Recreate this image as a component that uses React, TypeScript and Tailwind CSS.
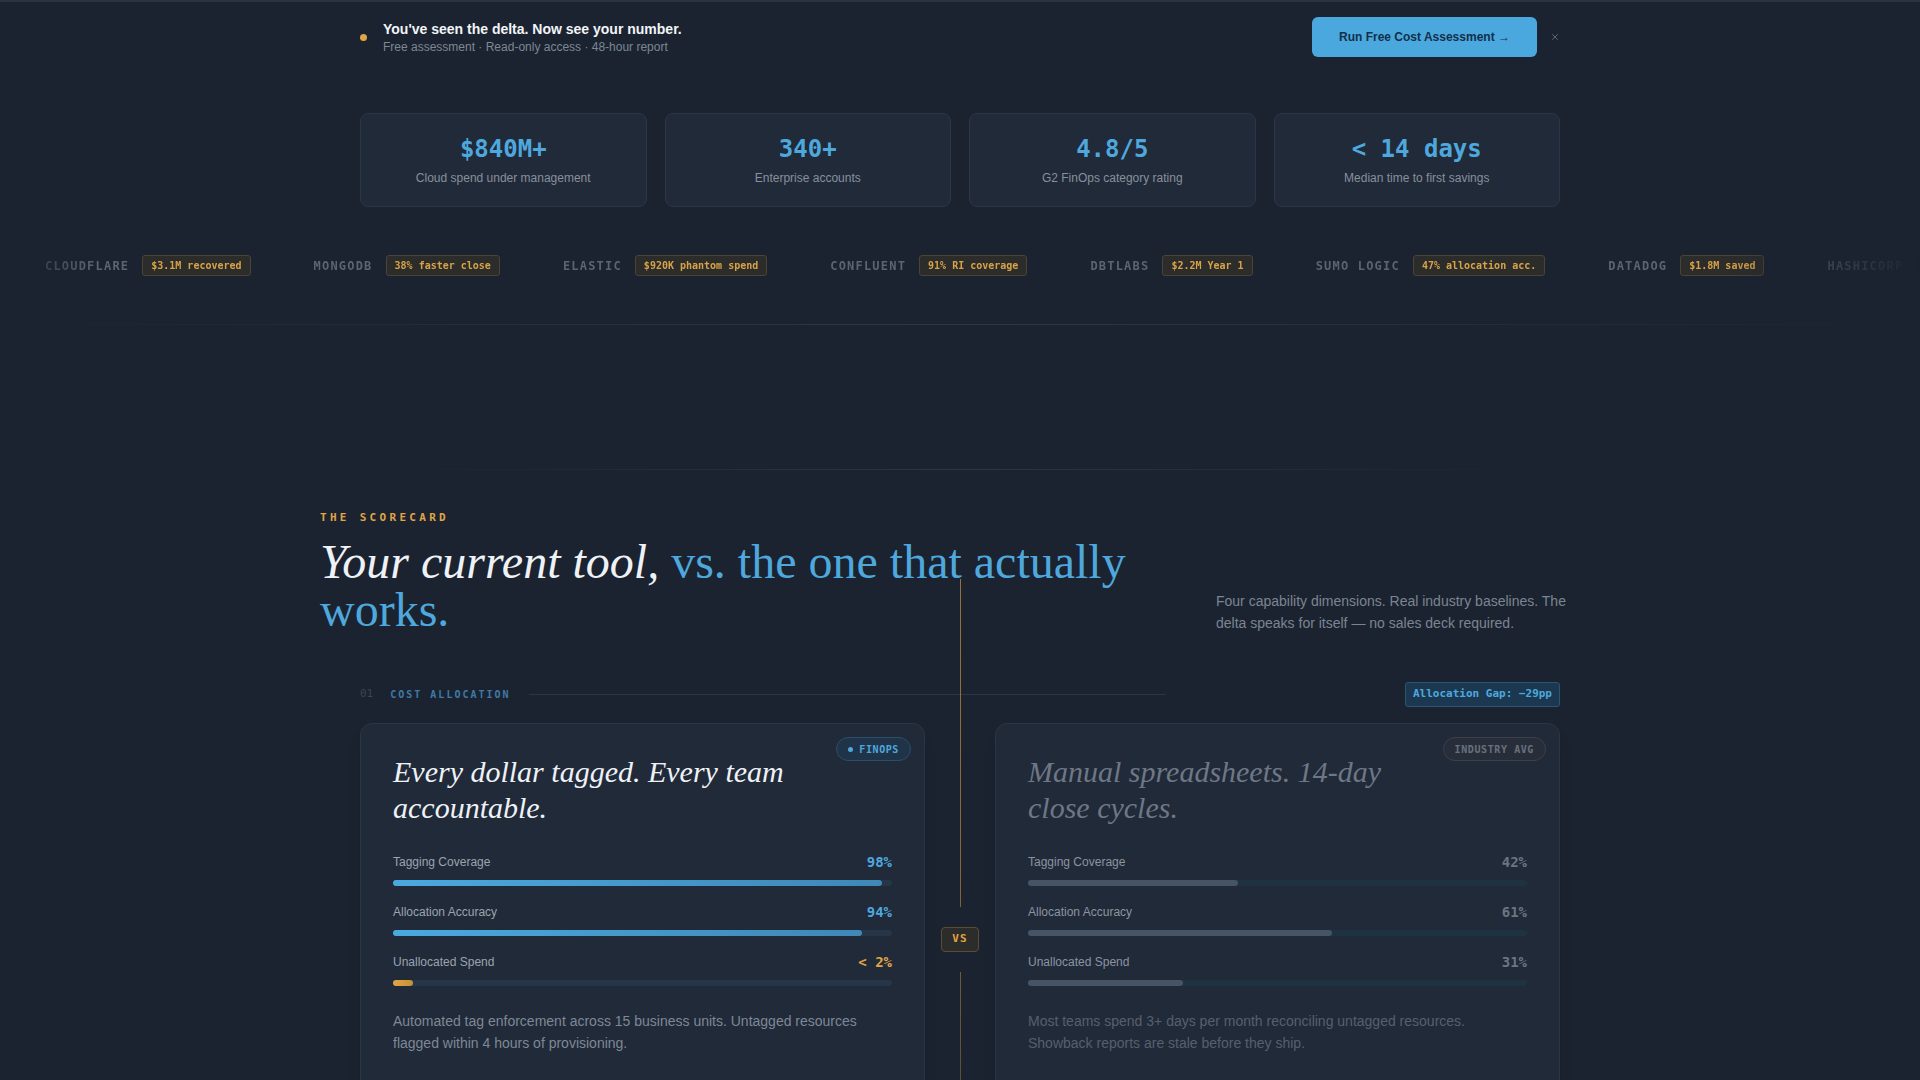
import { X } from 'lucide-react'

const mono = "font-['DejaVu_Sans_Mono',monospace]"
const serif = "font-['Liberation_Serif',serif]"

const stats = [
  { value: '$840M+', label: 'Cloud spend under management' },
  { value: '340+', label: 'Enterprise accounts' },
  { value: '4.8/5', label: 'G2 FinOps category rating' },
  { value: '< 14 days', label: 'Median time to first savings' },
]

const logos = [
  { name: 'CLOUDFLARE', tag: '$3.1M recovered' },
  { name: 'MONGODB', tag: '38% faster close' },
  { name: 'ELASTIC', tag: '$920K phantom spend' },
  { name: 'CONFLUENT', tag: '91% RI coverage' },
  { name: 'DBTLABS', tag: '$2.2M Year 1' },
  { name: 'SUMO LOGIC', tag: '47% allocation acc.' },
  { name: 'DATADOG', tag: '$1.8M saved' },
  { name: 'HASHICORP', tag: '$640K reclaimed' },
]

type Metric = { label: string; value: string; pct: number; warn?: boolean }

const finops: Metric[] = [
  { label: 'Tagging Coverage', value: '98%', pct: 98 },
  { label: 'Allocation Accuracy', value: '94%', pct: 94 },
  { label: 'Unallocated Spend', value: '< 2%', pct: 4, warn: true },
]

const industry: Metric[] = [
  { label: 'Tagging Coverage', value: '42%', pct: 42 },
  { label: 'Allocation Accuracy', value: '61%', pct: 61 },
  { label: 'Unallocated Spend', value: '31%', pct: 31 },
]

function MetricRow({ m, muted }: { m: Metric; muted?: boolean }) {
  return (
    <div>
      <div className="flex items-center justify-between h-[18px]">
        <span className={`text-[12px] ${muted ? 'text-[#8b94a0]' : 'text-[#9ba4b0]'}`}>{m.label}</span>
        <span
          className={`${mono} text-[14px] font-bold ${
            muted ? 'text-[#6b7582]' : m.warn ? 'text-[#e0a545]' : 'text-[#4ea8de]'
          }`}
        >
          {m.value}
        </span>
      </div>
      <div className={`mt-[9px] h-[6px] rounded-full ${muted ? 'bg-[#1e3242]' : 'bg-[#263548]'}`}>
        <div
          className={`h-full rounded-full ${
            muted
              ? 'bg-[#475466]'
              : m.warn
                ? 'bg-gradient-to-r from-[#e0a545] to-[#c98f35]'
                : 'bg-gradient-to-r from-[#4aa9df] to-[#3f88b7]'
          }`}
          style={{ width: `${m.pct}%` }}
        />
      </div>
    </div>
  )
}

function Card({
  badge,
  title,
  metrics,
  desc,
  muted,
}: {
  badge: string
  title: string
  metrics: Metric[]
  desc: string
  muted?: boolean
}) {
  return (
    <div className="relative h-[432px] rounded-xl border border-[#2a3546] bg-[#212a39] px-8 pt-[30px] shadow-lg">
      <div
        className={`absolute right-[13px] top-[13px] flex h-6 items-center gap-[6px] rounded-full border px-[11px] ${mono} text-[10px] font-bold tracking-[0.06em] ${
          muted
            ? 'border-[#3a414d] bg-[#272e3a] text-[#69717d]'
            : 'border-[#2c4d69] bg-[#1f3448] text-[#4ea8de]'
        }`}
      >
        {!muted && <span className="h-[5px] w-[5px] rounded-full bg-[#4ea8de]" />}
        {badge}
      </div>
      <h3
        className={`${serif} max-w-[400px] text-[30px] italic leading-[36px] ${
          muted ? 'text-[#6e7785]' : 'text-[#eef2f6]'
        }`}
      >
        {title}
      </h3>
      <div className="mt-[27px] flex flex-col gap-[17px]">
        {metrics.map((m) => (
          <MetricRow key={m.label} m={m} muted={muted} />
        ))}
      </div>
      <p className={`mt-[24px] text-[14px] leading-[22px] ${muted ? 'text-[#56606d]' : 'text-[#7e8895]'}`}>{desc}</p>
    </div>
  )
}

export default function App() {
  return (
    <div className="min-h-screen overflow-hidden bg-[#1b2330] font-['Liberation_Sans',Arial,sans-serif]">
      {/* sticky nudge */}
      <div className="border-t-2 border-[#283241]">
        <div className="mx-auto flex w-[1200px] items-center pt-[15px]">
          <span className="h-[7px] w-[7px] rounded-full bg-[#e0a545]" />
          <div className="ml-4">
            <div className="text-[14px] font-bold leading-[18px] text-[#f2f5f8]">You've seen the delta. Now see your number.</div>
            <div className="mt-[1px] text-[12px] leading-4 text-[#7d8794]">
              Free assessment · Read-only access · 48-hour report
            </div>
          </div>
          <button className="ml-auto h-10 w-[225px] rounded-md bg-[#4aa8de] text-[12px] font-bold text-[#12304a]">
            Run Free Cost Assessment →
          </button>
          <X className="ml-[13px] h-[10px] w-[10px] text-[#6b7481]" strokeWidth={2} />
        </div>
      </div>

      {/* stats */}
      <div className="mx-auto mt-[56px] grid w-[1200px] grid-cols-4 gap-[18px]">
        {stats.map((s) => (
          <div
            key={s.label}
            className="flex h-[94px] flex-col items-center justify-center rounded-lg border border-[#2b3647] bg-[#212a39]"
          >
            <div className={`${mono} text-[24px] font-bold leading-7 text-[#4ea8de]`}>{s.value}</div>
            <div className="mt-[7px] text-[12px] leading-4 text-[#87909c]">{s.label}</div>
          </div>
        ))}
      </div>

      {/* logo strip */}
      <div className="mt-[48px] flex h-[21px] items-center gap-[63px] whitespace-nowrap pl-[45px] [mask-image:linear-gradient(90deg,transparent,black_5%,black_90%,transparent)]">
        {logos.map((l) => (
          <div key={l.name} className="flex shrink-0 items-center gap-[13px]">
            <span className={`${mono} text-[12px] font-bold tracking-[0.1em] text-[#5a6472]`}>{l.name}</span>
            <span
              className={`${mono} flex h-[21px] items-center rounded-[3px] border border-[#4b4436] bg-[#2c2c2b] px-[8px] text-[10px] font-bold text-[#d8a348]`}
            >
              {l.tag}
            </span>
          </div>
        ))}
      </div>
      <div className="mt-[48px] h-px bg-gradient-to-r from-transparent via-[#2c3848] to-transparent" />

      <div className="mx-auto mt-[144px] h-px w-[1140px] bg-gradient-to-r from-transparent via-[#2b3646] to-transparent" />

      {/* scorecard */}
      <section className="relative mx-auto w-[1280px] pt-[40px]">
        <div className="absolute bottom-0 left-[640px] top-[109px] w-px bg-gradient-to-b from-[#c9953f]/70 via-[#c9953f]/60 to-[#c9953f]/30" />
        <div className={`${mono} text-[11px] font-bold leading-4 tracking-[0.3em] text-[#e0a545]`}>THE SCORECARD</div>
        <div className="mt-3 flex items-end justify-between">
          <h2 className={`${serif} max-w-[830px] text-[48px] leading-[48px] text-[#eef2f6]`}>
            <em>Your current tool,</em> <span className="text-[#4ea8de]">vs. the one that actually works.</span>
          </h2>
          <p className="w-[384px] text-[14px] leading-[22px] text-[#7b8592]">
            Four capability dimensions. Real industry baselines. The delta speaks for itself — no sales deck required.
          </p>
        </div>

        <div className="mt-12 px-10">
          <div className="flex h-[25px] items-center">
            <span className={`${mono} text-[11px] text-[#3a4454]`}>01</span>
            <span className={`${mono} ml-[17px] text-[10px] font-bold tracking-[0.2em] text-[#3f7aa6]`}>COST ALLOCATION</span>
            <span className="ml-[18px] h-px w-[637px] bg-[#2a3546]" />
            <span
              className={`${mono} ml-auto flex h-[25px] items-center rounded-[3px] border border-[#2b5575] bg-[#1b3850] px-[7px] text-[11px] font-bold text-[#4ea8de]`}
            >
              Allocation Gap: −29pp
            </span>
          </div>

          <div className="mt-4 grid grid-cols-[1fr_70px_1fr]">
            <Card
              badge="FINOPS"
              title="Every dollar tagged. Every team accountable."
              metrics={finops}
              desc="Automated tag enforcement across 15 business units. Untagged resources flagged within 4 hours of provisioning."
            />
            <div className="relative z-10 flex items-center justify-center">
              <div className="bg-[#1b2330] py-5">
                <div
                  className={`${mono} flex h-[25px] w-[38px] items-center justify-center rounded-[4px] border border-[#5a4d33] bg-[#2c2c2a] text-[11px] font-bold tracking-[0.1em] text-[#e0a545]`}
                >
                  VS
                </div>
              </div>
            </div>
            <Card
              muted
              badge="INDUSTRY AVG"
              title="Manual spreadsheets. 14-day close cycles."
              metrics={industry}
              desc="Most teams spend 3+ days per month reconciling untagged resources. Showback reports are stale before they ship."
            />
          </div>
        </div>
      </section>
    </div>
  )
}
